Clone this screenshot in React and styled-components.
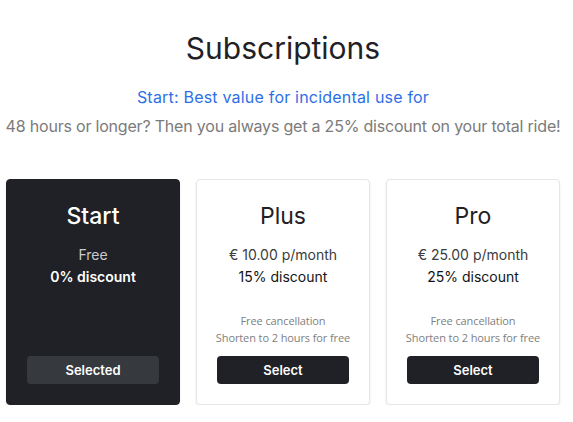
import React from "react";
import styled, { createGlobalStyle } from "styled-components";

const Global = createGlobalStyle`
  html, body { margin: 0; padding: 0; background: #fff; }
  body { font-family: Inter, "Noto Sans", sans-serif; color: #1f2126; }
`;

const Page = styled.div`
  width: 554px;
  margin-left: 6px;
  display: flex;
  flex-direction: column;
  align-items: center;
`;

const Title = styled.h1`
  margin: 29px 0 0;
  font-size: 30px;
  line-height: 38px;
  font-weight: 400;
  color: #1f2126;
`;

const Lead = styled.p`
  margin: 0;
  font-size: 16px;
  line-height: 29px;
  color: ${(p) => (p.$accent ? "#2d6fe6" : "#7b7b7b")};
  white-space: nowrap;
  letter-spacing: ${(p) => (p.$accent ? "0.2px" : "-0.2px")};
`;

const LeadBlock = styled.div`
  margin-top: 16px;
  display: flex;
  flex-direction: column;
  align-items: center;
`;

const Cards = styled.div`
  margin-top: 38px;
  width: 100%;
  display: grid;
  grid-template-columns: repeat(3, 1fr);
  gap: 16px;
`;

const Card = styled.div`
  height: 226px;
  box-sizing: border-box;
  border-radius: 4px;
  background: ${(p) => (p.$dark ? "#1f2126" : "#fff")};
  border: 1px solid ${(p) => (p.$dark ? "#1f2126" : "#e6e6e6")};
  box-shadow: 0 2px 3px rgba(0, 0, 0, 0.08);
  display: flex;
  flex-direction: column;
  align-items: center;
  padding: 20px 10px 20px;
  color: ${(p) => (p.$dark ? "#fff" : "#1f2126")};
`;

const Name = styled.div`
  font-size: 23px;
  line-height: 32px;
  font-weight: ${(p) => (p.$dark ? 500 : 400)};
`;

const Price = styled.div`
  margin-top: 12px;
  font-size: 14px;
  line-height: 22px;
  color: ${(p) => (p.$dark ? "#c9cacc" : "#3a3c40")};
`;

const Discount = styled.div`
  font-size: 14px;
  line-height: 22px;
  font-weight: ${(p) => (p.$dark ? 600 : 400)};
  color: ${(p) => (p.$dark ? "#fff" : "#111316")};
`;

const Notes = styled.div`
  margin-top: auto;
  margin-bottom: 10px;
  font-family: "Open Sans", sans-serif;
  font-size: 11px;
  line-height: 17px;
  letter-spacing: -0.1px;
  color: #808080;
  text-align: center;
  white-space: nowrap;
`;

const Button = styled.button`
  margin-top: ${(p) => (p.$push ? "auto" : "0")};
  width: 132px;
  height: 28px;
  border: none;
  border-radius: 4px;
  background: ${(p) => (p.$selected ? "#36393d" : "#1f2126")};
  color: #fff;
  font-family: Inter, sans-serif;
  font-size: 13px;
  font-weight: 600;
  cursor: pointer;
`;

const plans = [
  { name: "Start", price: "Free", discount: "0% discount", dark: true },
  { name: "Plus", price: "€ 10.00 p/month", discount: "15% discount" },
  { name: "Pro", price: "€ 25.00 p/month", discount: "25% discount" },
];

export default function App() {
  return (
    <>
      <Global />
      <Page>
        <Title>Subscriptions</Title>
        <LeadBlock>
          <Lead $accent>Start: Best value for incidental use for</Lead>
          <Lead>48 hours or longer? Then you always get a 25% discount on your total ride!</Lead>
        </LeadBlock>
        <Cards>
          {plans.map((p) => (
            <Card key={p.name} $dark={p.dark}>
              <Name $dark={p.dark}>{p.name}</Name>
              <Price $dark={p.dark}>{p.price}</Price>
              <Discount $dark={p.dark}>{p.discount}</Discount>
              {!p.dark && (
                <Notes>
                  Free cancellation
                  <br />
                  Shorten to 2 hours for free
                </Notes>
              )}
              <Button $selected={p.dark} $push={p.dark}>
                {p.dark ? "Selected" : "Select"}
              </Button>
            </Card>
          ))}
        </Cards>
      </Page>
    </>
  );
}
